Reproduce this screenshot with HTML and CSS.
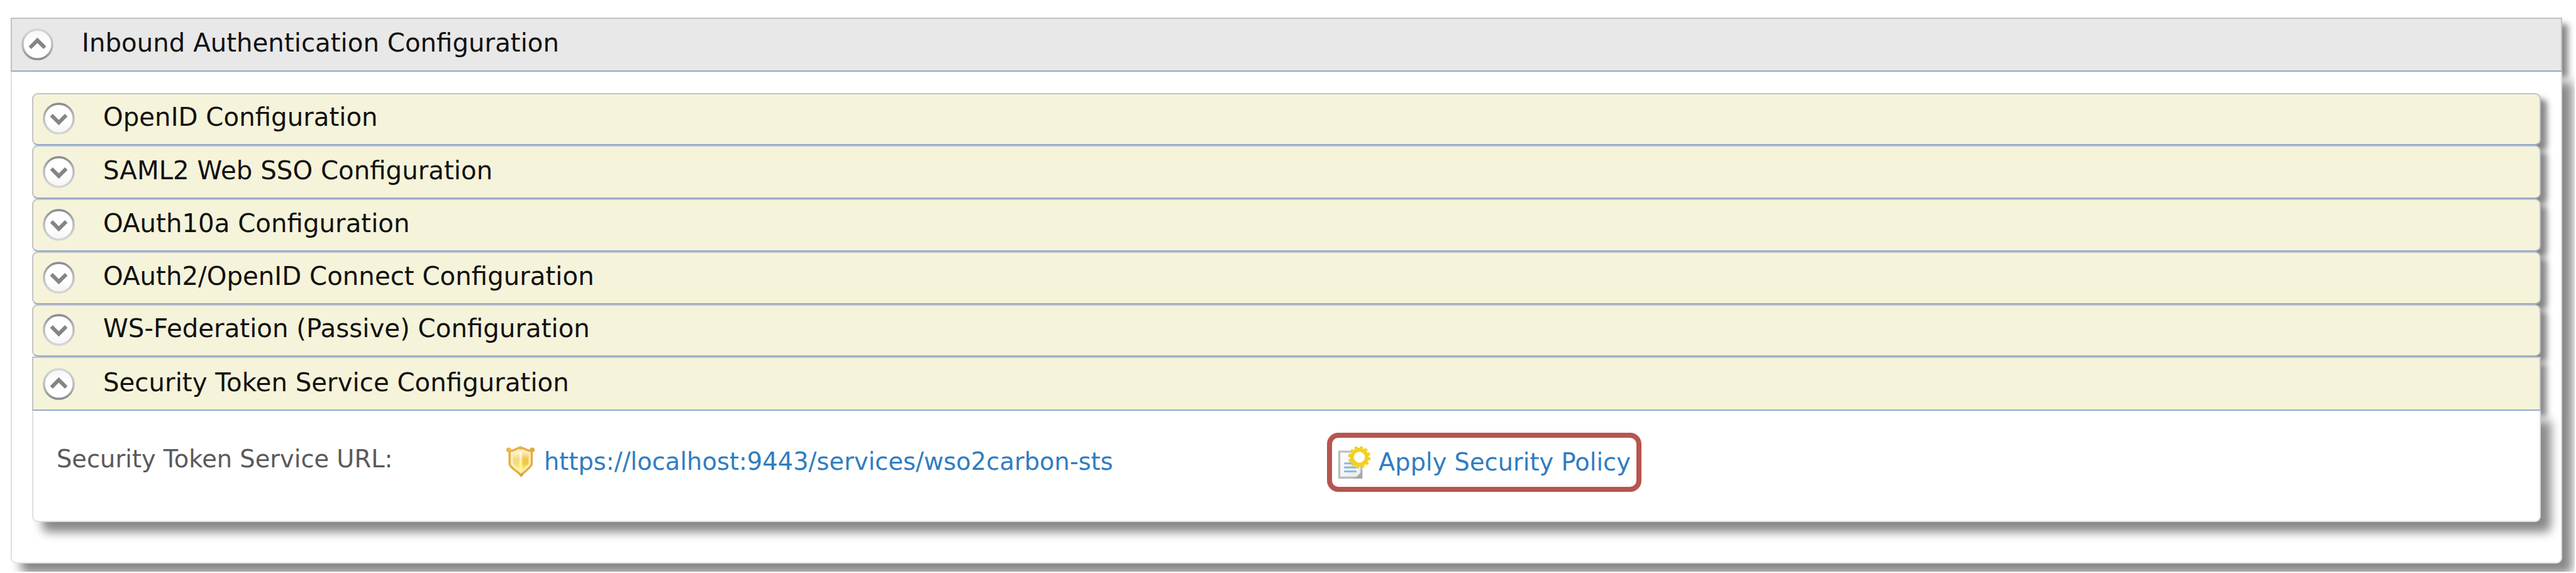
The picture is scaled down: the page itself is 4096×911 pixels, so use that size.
FILE: index.html
```html
<!DOCTYPE html>
<html lang="en">
<head>
<meta charset="utf-8">
<title>Inbound Authentication Configuration</title>
<link rel="stylesheet" href="styles.css">
</head>
<body>
<svg class="defs" aria-hidden="true">
  <defs>
    <linearGradient id="ring" x1="0" y1="0" x2="0" y2="1"><stop offset="0" stop-color="#8a8c8e"/><stop offset=".4" stop-color="#b8b9bb"/><stop offset="1" stop-color="#d6d6d7"/></linearGradient>
    <linearGradient id="face" x1="0" y1="0" x2="0" y2="1"><stop offset="0" stop-color="#ffffff"/><stop offset=".6" stop-color="#ffffff"/><stop offset="1" stop-color="#f4f4f4"/></linearGradient>
    <symbol id="chevron" viewBox="0 0 16 16">
      <circle cx="8" cy="8" r="7.4" fill="url(#face)" stroke="url(#ring)" stroke-width="1.1"/>
      <path d="M4.300 6.300 8 10 11.700 6.300" fill="none" stroke="#838587" stroke-width="1.900"/>
    </symbol>
  </defs>
</svg>
<main class="viewport">
  <section class="panel">
    <h2 class="bar bar-main"><svg class="toggle toggle-up"><use href="#chevron"/></svg><span class="title">Inbound Authentication Configuration</span></h2>
    <div class="panel-body">
      <div class="rows">
        <h3 class="bar"><svg class="toggle"><use href="#chevron"/></svg><span class="title">OpenID Configuration</span></h3>
        <h3 class="bar"><svg class="toggle"><use href="#chevron"/></svg><span class="title">SAML2 Web SSO Configuration</span></h3>
        <h3 class="bar"><svg class="toggle"><use href="#chevron"/></svg><span class="title">OAuth10a Configuration</span></h3>
        <h3 class="bar"><svg class="toggle"><use href="#chevron"/></svg><span class="title">OAuth2/OpenID Connect Configuration</span></h3>
        <h3 class="bar"><svg class="toggle"><use href="#chevron"/></svg><span class="title">WS-Federation (Passive) Configuration</span></h3>
        <h3 class="bar bar-open"><svg class="toggle toggle-up"><use href="#chevron"/></svg><span class="title">Security Token Service Configuration</span></h3>
      </div>
      <div class="sts">
        <span class="label">Security Token Service URL:</span>
        <a class="link url">
          <svg class="icon" viewBox="0 0 16 16">
            <defs>
              <linearGradient id="gold" x1="0" x2="1"><stop offset="0" stop-color="#f7dc7c"/><stop offset=".35" stop-color="#f6da78"/><stop offset=".5" stop-color="#fff6c8"/><stop offset=".64" stop-color="#f0c745"/><stop offset="1" stop-color="#efc84c"/></linearGradient>
              <linearGradient id="glow" x1="0" y1="0" x2="0" y2="1"><stop offset="0" stop-color="#fff" stop-opacity=".75"/><stop offset=".4" stop-color="#fff" stop-opacity="0"/><stop offset=".6" stop-color="#ffff70" stop-opacity="0"/><stop offset="1" stop-color="#ffff70"/></linearGradient>
            </defs>
            <path d="M2.300 2.400C4 3.400 4.900 1.600 7.700 1.100 10.500 1.600 11.600 3.400 13.300 2.400V9.500C12 12.200 9.800 12.600 8 15 6.300 12.800 3.600 12.200 2.300 9.500Z" fill="#fdeec0" stroke="#e2ae46" stroke-width="1.100"/>
            <path d="M4 4.200C5.500 4 6.600 3.200 7.800 2.900 9 3.200 10.300 4 11.800 4.200V9.100C10.800 10.800 9.100 11.500 8 12.900 6.900 11.500 5 10.800 4 9.100Z" fill="url(#gold)"/>
            <path d="M4 4.200C5.500 4 6.600 3.200 7.800 2.900 9 3.200 10.300 4 11.800 4.200V9.100C10.800 10.800 9.100 11.500 8 12.900 6.900 11.500 5 10.800 4 9.100Z" fill="url(#glow)"/>
            <circle cx="1.800" cy="2.300" r="1.200" fill="#ecbb3c"/><circle cx="13.600" cy="2.300" r="1.200" fill="#e0aa3c"/><circle cx="7.700" cy="1.300" r=".9" fill="#e8b844"/><circle cx="8.200" cy="14.700" r=".8" fill="#dea63c"/>
          </svg>
          <span>https://localhost:9443/services/wso2carbon-sts</span>
        </a>
        <a class="link policy">
          <svg class="icon" viewBox="0 0 16 16">
            <defs><linearGradient id="sheet" x1="0" y1="0" x2="1" y2="1"><stop offset="0" stop-color="#fff"/><stop offset="1" stop-color="#e9eaec"/></linearGradient></defs>
            <path d="M.5 2.500H11.500V15.500H.5Z" fill="url(#sheet)" stroke="#b9bbbd" stroke-width="1"/>
            <path d="M12 11V16H7.200C9.500 15.300 11.500 13 12 11Z" fill="#a6a8ac"/>
            <path d="M2.900 8.400H7M2.900 10.400H9M2.900 12.400H9" stroke="#8db8da" stroke-width="1"/>
            <circle cx="10.500" cy="5.300" r="4.900" fill="none" stroke="#f3d021" stroke-width="1.300" stroke-dasharray="1.540 1.025"/>
            <circle cx="10.500" cy="5.300" r="3.700" fill="#fff" stroke="#f3d021" stroke-width="1.900"/>
          </svg>
          <span>Apply Security Policy</span>
        </a>
      </div>
    </div>
  </section>
</main>
</body>
</html>
```
FILE: styles.css
```css
* { box-sizing: border-box; }
body {
  margin: 0;
  background: #fff;
  font-family: "DejaVu Sans", Verdana, sans-serif;
}
.defs { display: block; width: 0; height: 0; }
.viewport {
  width: 4094px;
  height: 909px;
  padding: 28px 20px 0 17px;
  overflow: hidden;
}
.bar {
  display: flex;
  align-items: flex-end;
  gap: 45px;
  margin: 0;
  padding: 0 0 15px 15px;
  border: 2px solid #c0c2c5;
  border-bottom-color: #94a9cc;
  border-radius: 9px;
  background: #f5f3da;
  box-shadow: 9.6px 9.6px 9.6px #888;
  color: #111;
  font-size: 40.3px;
  font-weight: 400;
  line-height: 50px;
  white-space: nowrap;
}
.bar-main {
  height: 86px;
  padding-bottom: 16px;
  border-radius: 0;
  background: #e8e8e8;
}
.bar-open { border-radius: 0; }
.title { margin-bottom: 2px; }
.toggle { flex: none; width: 51px; height: 51px; }
.toggle-up { transform: rotate(180deg); }
.panel-body {
  height: 782px;
  padding: 34px 32px 0;
  border: 2px solid #e0e0e0;
  border-top: 0;
  border-radius: 0 0 9px 9px;
  background: #fff;
  box-shadow: 16px 16px 16px #888;
}
.rows {
  display: grid;
  grid-template-rows: 83px 85px 84px 84px 83px 86px;
}
.sts {
  position: relative;
  display: flex;
  align-items: flex-start;
  height: 177px;
  padding-left: 37px;
  border: 2px solid #e0e0e0;
  border-top: 0;
  border-radius: 0 0 9px 9px;
  background: #fff;
  box-shadow: 16px 16px 16px #888;
  font-size: 38.4px;
  line-height: 50px;
  white-space: nowrap;
}
.label { width: 713px; padding-top: 52px; color: #5a5a5a; }
.link { display: flex; align-items: center; color: #307dbf; }
.icon { flex: none; width: 51px; height: 51px; }
.url { gap: 11px; width: 1307px; padding-top: 55px; }
.policy {
  gap: 13px;
  width: 500px;
  height: 94px;
  margin-top: 35px;
  padding-left: 10px;
  border: 8px solid #b8544f;
  border-radius: 18px;
}
```
